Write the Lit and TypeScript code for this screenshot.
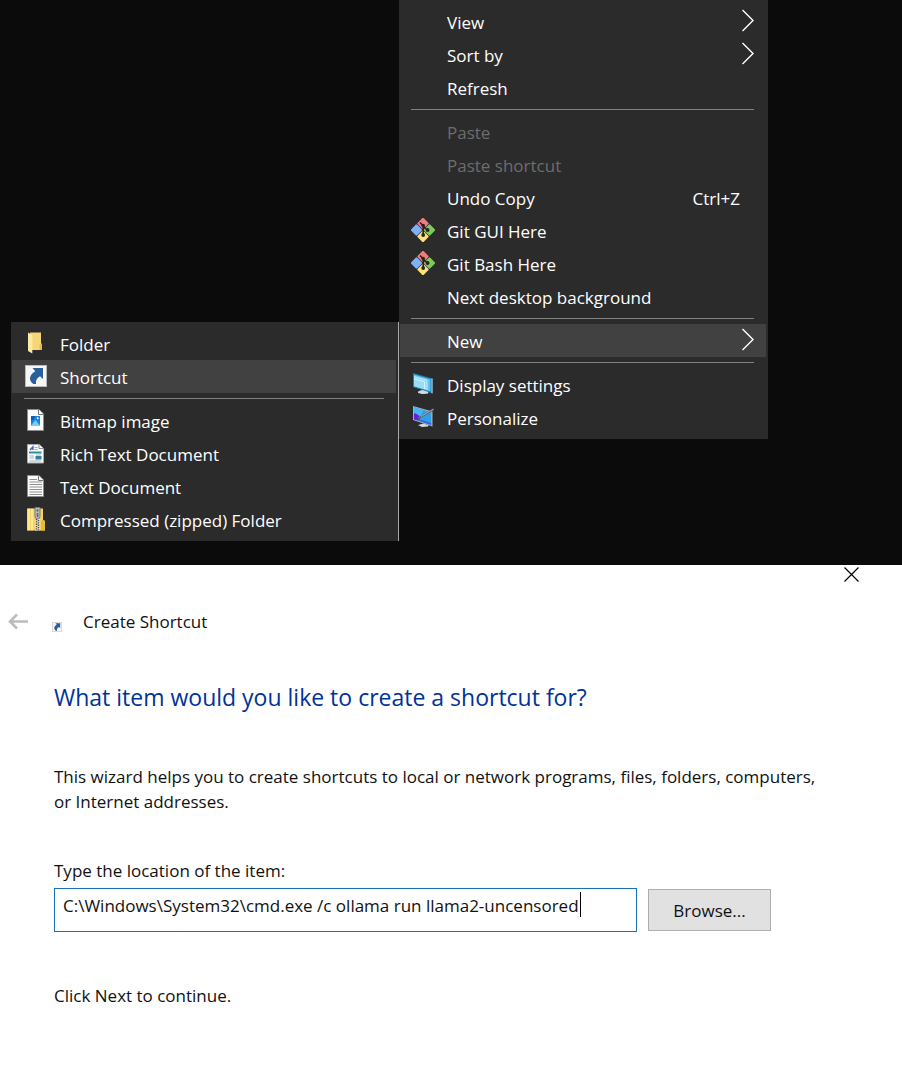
import { LitElement, html, css, svg, nothing, TemplateResult } from "lit";
import { customElement, property } from "lit/decorators.js";

const git = html`<svg width="24" height="24" viewBox="0 0 24 24" aria-hidden="true">
  <g transform="rotate(45 12 12)">
    <rect x="3.100" y="3.100" width="8.600" height="8.600" rx="1.200" fill="#f37c80"/>
    <rect x="12.300" y="3.100" width="8.600" height="8.600" rx="1.200" fill="#7ecb5c"/>
    <rect x="3.100" y="12.300" width="8.600" height="8.600" rx="1.200" fill="#7fb0fb"/>
    <rect x="12.300" y="12.300" width="8.600" height="8.600" rx="1.200" fill="#fde37c"/>
  </g>
  <path d="M9 4.500 12.200 8V18M12.200 8l4.300 4.200" fill="none" stroke="#2b2320" stroke-width="1.600"/>
  <circle cx="12.200" cy="7.600" r="1.800" fill="#2b2320"/><circle cx="16.600" cy="12" r="1.900" fill="#2b2320"/><circle cx="12.200" cy="17" r="1.900" fill="#2b2320"/>
</svg>`;

const display = html`<svg width="24" height="24" viewBox="0 0 24 24" aria-hidden="true">
  <path d="M7 19.5 12 17.5l5 1.5v2l-5 1-5-1z" fill="#c3ccd0"/>
  <path d="M2 1 21.5 6.500V21.500L2 15z" fill="#1b7fb4"/>
  <path d="M3 2.500 19.500 7.200V19.500L3 14.200z" fill="#5cc3f2"/>
  <path d="M3 5 15.500 8.500V17.800L3 14.200z" fill="#9bdcfb"/>
  <path d="M3 4.500 16 8.200V18M3 6.800 13.500 9.800V17" fill="none" stroke="#e2f6ff" stroke-width=".8"/>
  <path d="M21 6.500V21.300" stroke="#b5c4cb" stroke-width="1.200"/>
  <path d="M7 20 12.500 18.500 17.500 20.200 17 21.600 11 22z" fill="#d3dadd"/>
</svg>`;

const personalize = html`<svg width="24" height="24" viewBox="0 0 24 24" aria-hidden="true">
  <path d="M2 1 21.500 6.500V21.500L2 15z" fill="#9fb4c0"/>
  <path d="M3 2.300 20.200 7.200V20L3 14.300z" fill="#2f9fe8"/>
  <path d="M3 2.300 12 5 10 11 3 10z" fill="#48b4f2"/>
  <path d="M3 10 7.500 11 9 14.500 20.200 18V20L3 14.300z" fill="#3c62e4"/>
  <path d="M3 8 7.500 10 8.500 14.500 6 15.300 3 14.300z" fill="#6a1fe0"/>
  <path d="M7 13.500 22.500 4.500" stroke="#5a6268" stroke-width="2"/>
  <path d="M10 11.500 22.500 4" stroke="#b7bec2" stroke-width=".8"/>
  <path d="M7 20 12.500 18.500 17.500 20.200 17 21.600 11 22z" fill="#d3dadd"/>
</svg>`;

const folder = html`<svg width="24" height="24" viewBox="0 0 24 24" aria-hidden="true">
  <path d="M6 1.500H17V12.500L18 13V19H8z" fill="#f5d778"/>
  <path d="M17 12.500 18 13V19H15.500V14z" fill="#e3b84f"/>
  <path d="M4 1.500 8.300 4V22.500L4 20z" fill="#ffeaa2"/>
</svg>`;

const arrowArt = svg`
  <rect x=".5" y=".5" width="21" height="21" fill="#f6f6f7" stroke="#b9babb"/>
  <path d="M7.500 3H18V14L15 11.200C11.800 13 10.500 15.500 11 19H8.500C3.600 15.800 3.500 10.500 10.300 6.300z" fill="#2a5f9e"/>`;
const shortcut = html`<svg width="22" height="22" viewBox="0 0 22 22" aria-hidden="true">${arrowArt}</svg>`;
const smallShortcut = html`<svg width="10" height="10" viewBox="0 0 22 22" aria-hidden="true">${arrowArt}</svg>`;

const page = svg`
  <path d="M3.500 1.500H15L19.500 6V22.500H3.500z" fill="#fbfbfb" stroke="#8d8d8d"/>
  <path d="M14.500 1.500V6.500H19.500" fill="#fff" stroke="#777"/>`;

const bitmap = html`<svg width="24" height="24" viewBox="0 0 24 24" aria-hidden="true">${page}
  <rect x="7" y="8" width="9" height="9.500" fill="#1686dd"/>
  <path d="M7 17.500 11.500 12 16 17.500z" fill="#79cdf8"/>
  <path d="M7 8h4l-1 3-3 2z" fill="#1158b5"/><circle cx="13.700" cy="10.300" r="1" fill="#fff"/>
</svg>`;

const rich = html`<svg width="24" height="24" viewBox="0 0 24 24" aria-hidden="true">
  <path d="M3.500 3.500H15L19.500 7.500V22H3.500z" fill="#f8fafb" stroke="#a6abad"/>
  <path d="M15 3.500V7.500H19.500" fill="#fff" stroke="#8a8f92"/>
  <path d="M6 9 9 5.500V9M7 7.800H9" fill="none" stroke="#4a59c9" stroke-width="1.200"/>
  <path d="M10.500 6.500H13.500M10.500 8.500H13.500" stroke="#98a6df"/>
  <rect x="5" y="10.500" width="12.500" height="2" fill="#2b919f"/>
  <path d="M5.500 15H10M5.500 17H10M5.500 20H17M12 14H17" stroke="#a2b6c1"/>
  <rect x="11.500" y="15" width="6" height="3.500" fill="#357da8"/>
</svg>`;

const text = html`<svg width="24" height="24" viewBox="0 0 24 24" aria-hidden="true">${page}
  <path d="M5.500 5.500H13M5.500 8H18M5.500 10.500H18M5.500 13H18M5.500 15.500H18M5.500 18H18M5.500 20.500H18" stroke="#8f8f8f"/>
</svg>`;

const zip = html`<svg width="24" height="24" viewBox="0 0 24 24" aria-hidden="true">
  <path d="M3 1.500H19V13L21 14V23.500H3z" fill="#f5d465"/>
  <path d="M5 1.500V23.500M8 1.500V23.500" stroke="#ffeca6" stroke-width="1.500"/>
  <path d="M17 13.500 19 13l2 1V23.500H17z" fill="#e5b941"/>
  <rect x="11" y="11" width="5" height="12.500" fill="#ece5cc"/>
  <path d="M12.500 12V23.500" stroke="#50504c" stroke-width="1.500" stroke-dasharray="1.300 1"/>
  <path d="M14.500 13V23.500" stroke="#50504c" stroke-width="1.500" stroke-dasharray="1.300 1"/>
  <path d="M11 .5H16V9.500Q16 12 13.500 12T11 9.500z" fill="#b9bcbe" stroke="#74787b"/>
  <circle cx="13.500" cy="3.500" r="1" fill="#4c5053"/><rect x="12.800" y="6" width="1.500" height="4" fill="#60656a"/>
</svg>`;

interface Entry {
  label: string;
  icon?: TemplateResult;
  hint?: string;
  submenu?: boolean;
  disabled?: boolean;
  active?: boolean;
}

const desktopMenu: Entry[][] = [
  [{ label: "View", submenu: true }, { label: "Sort by", submenu: true }, { label: "Refresh" }],
  [
    { label: "Paste", disabled: true },
    { label: "Paste shortcut", disabled: true },
    { label: "Undo Copy", hint: "Ctrl+Z" },
    { label: "Git GUI Here", icon: git },
    { label: "Git Bash Here", icon: git },
    { label: "Next desktop background" },
  ],
  [{ label: "New", submenu: true, active: true }],
  [{ label: "Display settings", icon: display }, { label: "Personalize", icon: personalize }],
];

const newMenu: Entry[][] = [
  [{ label: "Folder", icon: folder }, { label: "Shortcut", icon: shortcut, active: true }],
  [
    { label: "Bitmap image", icon: bitmap },
    { label: "Rich Text Document", icon: rich },
    { label: "Text Document", icon: text },
    { label: "Compressed (zipped) Folder", icon: zip },
  ],
];

@customElement("context-menu")
export class ContextMenu extends LitElement {
  @property({ attribute: false }) groups: Entry[][] = [];

  static styles = css`
    :host {
      --inset: 11px;
      display: block; box-sizing: border-box; background: #2b2b2b; padding: 5px 2px 5px 1px;
    }
    .group + .group { margin-top: 5px; }
    .group + .group::before {
      content: ""; display: block; height: 1px; margin: 0 12px 5px var(--inset); background: #808080;
    }
    .item {
      display: flex; align-items: center; gap: 12px; width: 100%; height: 33px;
      padding: 0 12px 0 var(--inset); border: 0; background: none; color: #fff;
      font: 17px/24px "Open Sans", "Noto Sans", sans-serif; text-align: left;
    }
    .item:disabled { color: #6d6d6d; }
    .active { background: #414141; }
    .icon { display: flex; flex: none; justify-content: center; width: 24px; padding-bottom: 2px; }
    .label, .hint { padding-top: 2px; white-space: nowrap; }
    .label { flex: 1; }
    .hint { padding-right: 14px; }
    .chevron { flex: none; padding-bottom: 2px; }
  `;

  render() {
    return this.groups.map(
      (group) => html`<div class="group" role="group">
        ${group.map(
          (e) => html`<button class="item ${e.active ? "active" : ""}" role="menuitem" ?disabled=${e.disabled}>
            <span class="icon">${e.icon ?? nothing}</span>
            <span class="label">${e.label}</span>
            ${e.hint ? html`<span class="hint">${e.hint}</span>` : nothing}
            ${e.submenu
              ? html`<svg class="chevron" width="13" height="24" viewBox="0 0 13 24" aria-hidden="true">
                  <path d="M1.500 1 12 11.500 1.500 22" fill="none" stroke="#fff" stroke-width="1.400"/>
                </svg>`
              : nothing}
          </button>`
        )}
      </div>`
    );
  }
}

@customElement("shortcut-wizard")
export class ShortcutWizard extends LitElement {
  static styles = css`
    :host {
      display: block; background: #fff; color: #111;
      font: 17px/25px "Open Sans", "Noto Sans", sans-serif;
    }
    .titlebar { display: flex; justify-content: flex-end; padding: 1px 42px 0 0; }
    .close, .back { display: flex; padding: 0; border: 0; background: none; }
    .header { display: flex; align-items: center; padding: 26px 8px 0; }
    .badge { display: flex; margin: 10px 21px 0 24px; }
    .name { margin: 0; font: inherit; }
    .content { padding: 0 54px; }
    .question { margin: 45px 0 0; font-size: 23px; line-height: 36px; font-weight: 400; color: #003399; }
    .intro { margin: 49px 0 0; max-width: 780px; }
    .label { display: block; margin-top: 44px; }
    .row { display: flex; align-items: center; gap: 11px; margin-top: 5px; }
    .field { position: relative; flex: 0 1 583px; display: flex; }
    .location {
      box-sizing: border-box; width: 100%; height: 44px; margin: 0; padding: 0 8px 10px; border: 1px solid #1a6fb5;
      border-radius: 0; outline: none; background: #fff; color: #111; font: inherit; caret-color: transparent;
    }
    .caret { position: absolute; left: 526px; top: 4px; width: 1px; height: 25px; background: #000; }
    .browse {
      width: 123px; height: 42px; padding: 0; border: 1px solid #adadad; background: #e1e1e1;
      color: #111; font: inherit;
    }
    .next { margin: 51px 0 0; }
  `;

  render() {
    return html`
      <div class="titlebar">
        <button class="close" aria-label="Close">
          <svg width="17" height="17" viewBox="0 0 17 17"><path d="M1.500 1.500 15.500 15.500M15.500 1.500 1.500 15.500" stroke="#000" stroke-width="1.200"/></svg>
        </button>
      </div>
      <header class="header">
        <button class="back" aria-label="Back">
          <svg width="20" height="17" viewBox="0 0 20 17">
            <path d="M20 8.500H2.500M9 1.500 2 8.500 9 15.500" fill="none" stroke="#bcbcbc" stroke-width="2.500"/>
          </svg>
        </button>
        <span class="badge">${smallShortcut}</span>
        <h1 class="name">Create Shortcut</h1>
      </header>
      <div class="content">
        <h2 class="question">What item would you like to create a shortcut for?</h2>
        <p class="intro">This wizard helps you to create shortcuts to local or network programs, files, folders, computers, or Internet addresses.</p>
        <label class="label" for="location">Type the location of the item:</label>
        <div class="row">
          <div class="field">
            <input class="location" id="location" type="text" spellcheck="false"
              value="C:\\Windows\\System32\\cmd.exe /c ollama run llama2-uncensored" />
            <span class="caret"></span>
          </div>
          <button class="browse">Browse...</button>
        </div>
        <p class="next">Click Next to continue.</p>
      </div>
    `;
  }
}

@customElement("app-root")
export class AppRoot extends LitElement {
  static styles = css`
    :host { display: flex; flex-direction: column; min-height: 100vh; background: #fff; }
    .desktop { display: flex; align-items: flex-start; padding: 0 11px 24px; background: #0b0b0b; }
    .new { --inset: 12px; flex: 0 1 388px; margin-top: 322px; border-right: 1px solid #a8a8a8; }
    .main { flex: 0 1 369px; }
  `;

  render() {
    return html`
      <section class="desktop">
        <context-menu class="new" role="menu" aria-label="New" .groups=${newMenu}></context-menu>
        <context-menu class="main" role="menu" aria-label="Desktop" .groups=${desktopMenu}></context-menu>
      </section>
      <shortcut-wizard></shortcut-wizard>
    `;
  }
}
